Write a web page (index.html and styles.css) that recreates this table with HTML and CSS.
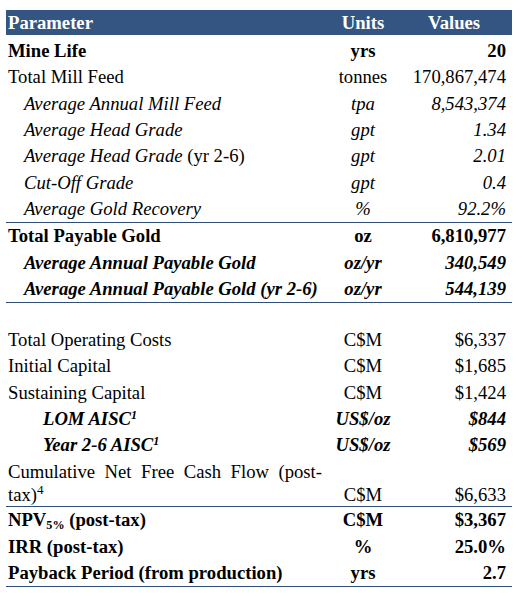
FILE: index.html
```html
<!DOCTYPE html>
<html>
<head>
<meta charset="utf-8">
<link rel="stylesheet" href="styles.css">
</head>
<body>
<table class="tbl">
  <colgroup><col class="c1"><col class="c2"><col class="c3"></colgroup>
  <thead>
    <tr class="head"><th class="p">Parameter</th><th class="u">Units</th><th class="v">Values</th></tr>
  </thead>
  <tbody>
    <tr class="first b"><td class="p">Mine Life</td><td class="u">yrs</td><td class="v">20</td></tr>
    <tr><td class="p">Total Mill Feed</td><td class="u">tonnes</td><td class="v">170,867,474</td></tr>
    <tr class="i"><td class="p ind">Average Annual Mill Feed</td><td class="u">tpa</td><td class="v">8,543,374</td></tr>
    <tr class="i"><td class="p ind">Average Head Grade</td><td class="u">gpt</td><td class="v">1.34</td></tr>
    <tr class="i"><td class="p ind">Average Head Grade <span class="up">(yr 2-6)</span></td><td class="u">gpt</td><td class="v">2.01</td></tr>
    <tr class="i"><td class="p ind">Cut-Off Grade</td><td class="u">gpt</td><td class="v">0.4</td></tr>
    <tr class="i line"><td class="p ind">Average Gold Recovery</td><td class="u">%</td><td class="v">92.2%</td></tr>
    <tr class="b"><td class="p">Total Payable Gold</td><td class="u">oz</td><td class="v">6,810,977</td></tr>
    <tr class="b i"><td class="p ind">Average Annual Payable Gold</td><td class="u">oz/yr</td><td class="v">340,549</td></tr>
    <tr class="b i line"><td class="p ind nw">Average Annual Payable Gold (yr 2-6)</td><td class="u">oz/yr</td><td class="v">544,139</td></tr>
    <tr class="blank"><td></td><td></td><td></td></tr>
    <tr><td class="p">Total Operating Costs</td><td class="u">C$M</td><td class="v">$6,337</td></tr>
    <tr><td class="p">Initial Capital</td><td class="u">C$M</td><td class="v">$1,685</td></tr>
    <tr><td class="p">Sustaining Capital</td><td class="u">C$M</td><td class="v">$1,424</td></tr>
    <tr class="b i"><td class="p ind2">LOM AISC<sup>1</sup></td><td class="u">US$/oz</td><td class="v">$844</td></tr>
    <tr class="b i"><td class="p ind2">Year 2-6 AISC<sup>1</sup></td><td class="u">US$/oz</td><td class="v">$569</td></tr>
    <tr class="line wrap"><td class="p just">Cumulative Net Free Cash Flow (post-tax)<sup class="s4">4</sup></td><td class="u">C$M</td><td class="v">$6,633</td></tr>
    <tr class="b"><td class="p">NPV<sub>5%</sub> (post-tax)</td><td class="u">C$M</td><td class="v">$3,367</td></tr>
    <tr class="b"><td class="p">IRR (post-tax)</td><td class="u">%</td><td class="v">25.0%</td></tr>
    <tr class="b line"><td class="p">Payback Period (from production)</td><td class="u">yrs</td><td class="v">2.7</td></tr>
  </tbody>
</table>
</body>
</html>
```

FILE: styles.css
```css
html, body {
  margin: 0;
  padding: 0;
  background: #ffffff;
}

.tbl {
  margin: 10px 0 0 6px;
  width: 506px;
  border-collapse: collapse;
  table-layout: fixed;
  font-family: "Liberation Serif", "Times New Roman", serif;
  font-size: 18.67px;
  color: #000000;
}

.c1 { width: 322px; }
.c2 { width: 70px; }
.c3 { width: 114px; }

.tbl th,
.tbl td {
  padding: 1.17px 0;
  line-height: 24px;
  vertical-align: bottom;
}

.head th {
  background: #345581;
  color: #ffffff;
  font-weight: bold;
  height: 25px;
  padding: 0;
  line-height: 25px;
  vertical-align: middle;
}

.head th.v { text-align: center; padding-left: 4px; }

.p {
  text-align: left;
  padding-left: 2px !important;
  padding-right: 6px !important;
}

.u { text-align: center; }

.v {
  text-align: right;
  padding-right: 6px !important;
}

.first td { padding-top: 4px; }

.b td { font-weight: bold; }
.i td { font-style: italic; }

.ind { padding-left: 18px !important; }
.ind2 { padding-left: 37px !important; }

.nw { white-space: nowrap; }

.up { font-style: normal; }

.line td { border-bottom: 1.5px solid #2e4d7b; }

.blank td {
  height: 24px;
  padding: 0;
}

.wrap td {
  line-height: 23px;
  padding-bottom: 0.5px;
}

.just {
  text-align: justify;
}

sup {
  font-size: 0.65em;
  line-height: 0;
  vertical-align: 0.5em;
}

.s4 { font-size: 0.7em; }

sub {
  font-size: 0.65em;
  line-height: 0;
  vertical-align: -0.25em;
}
```
